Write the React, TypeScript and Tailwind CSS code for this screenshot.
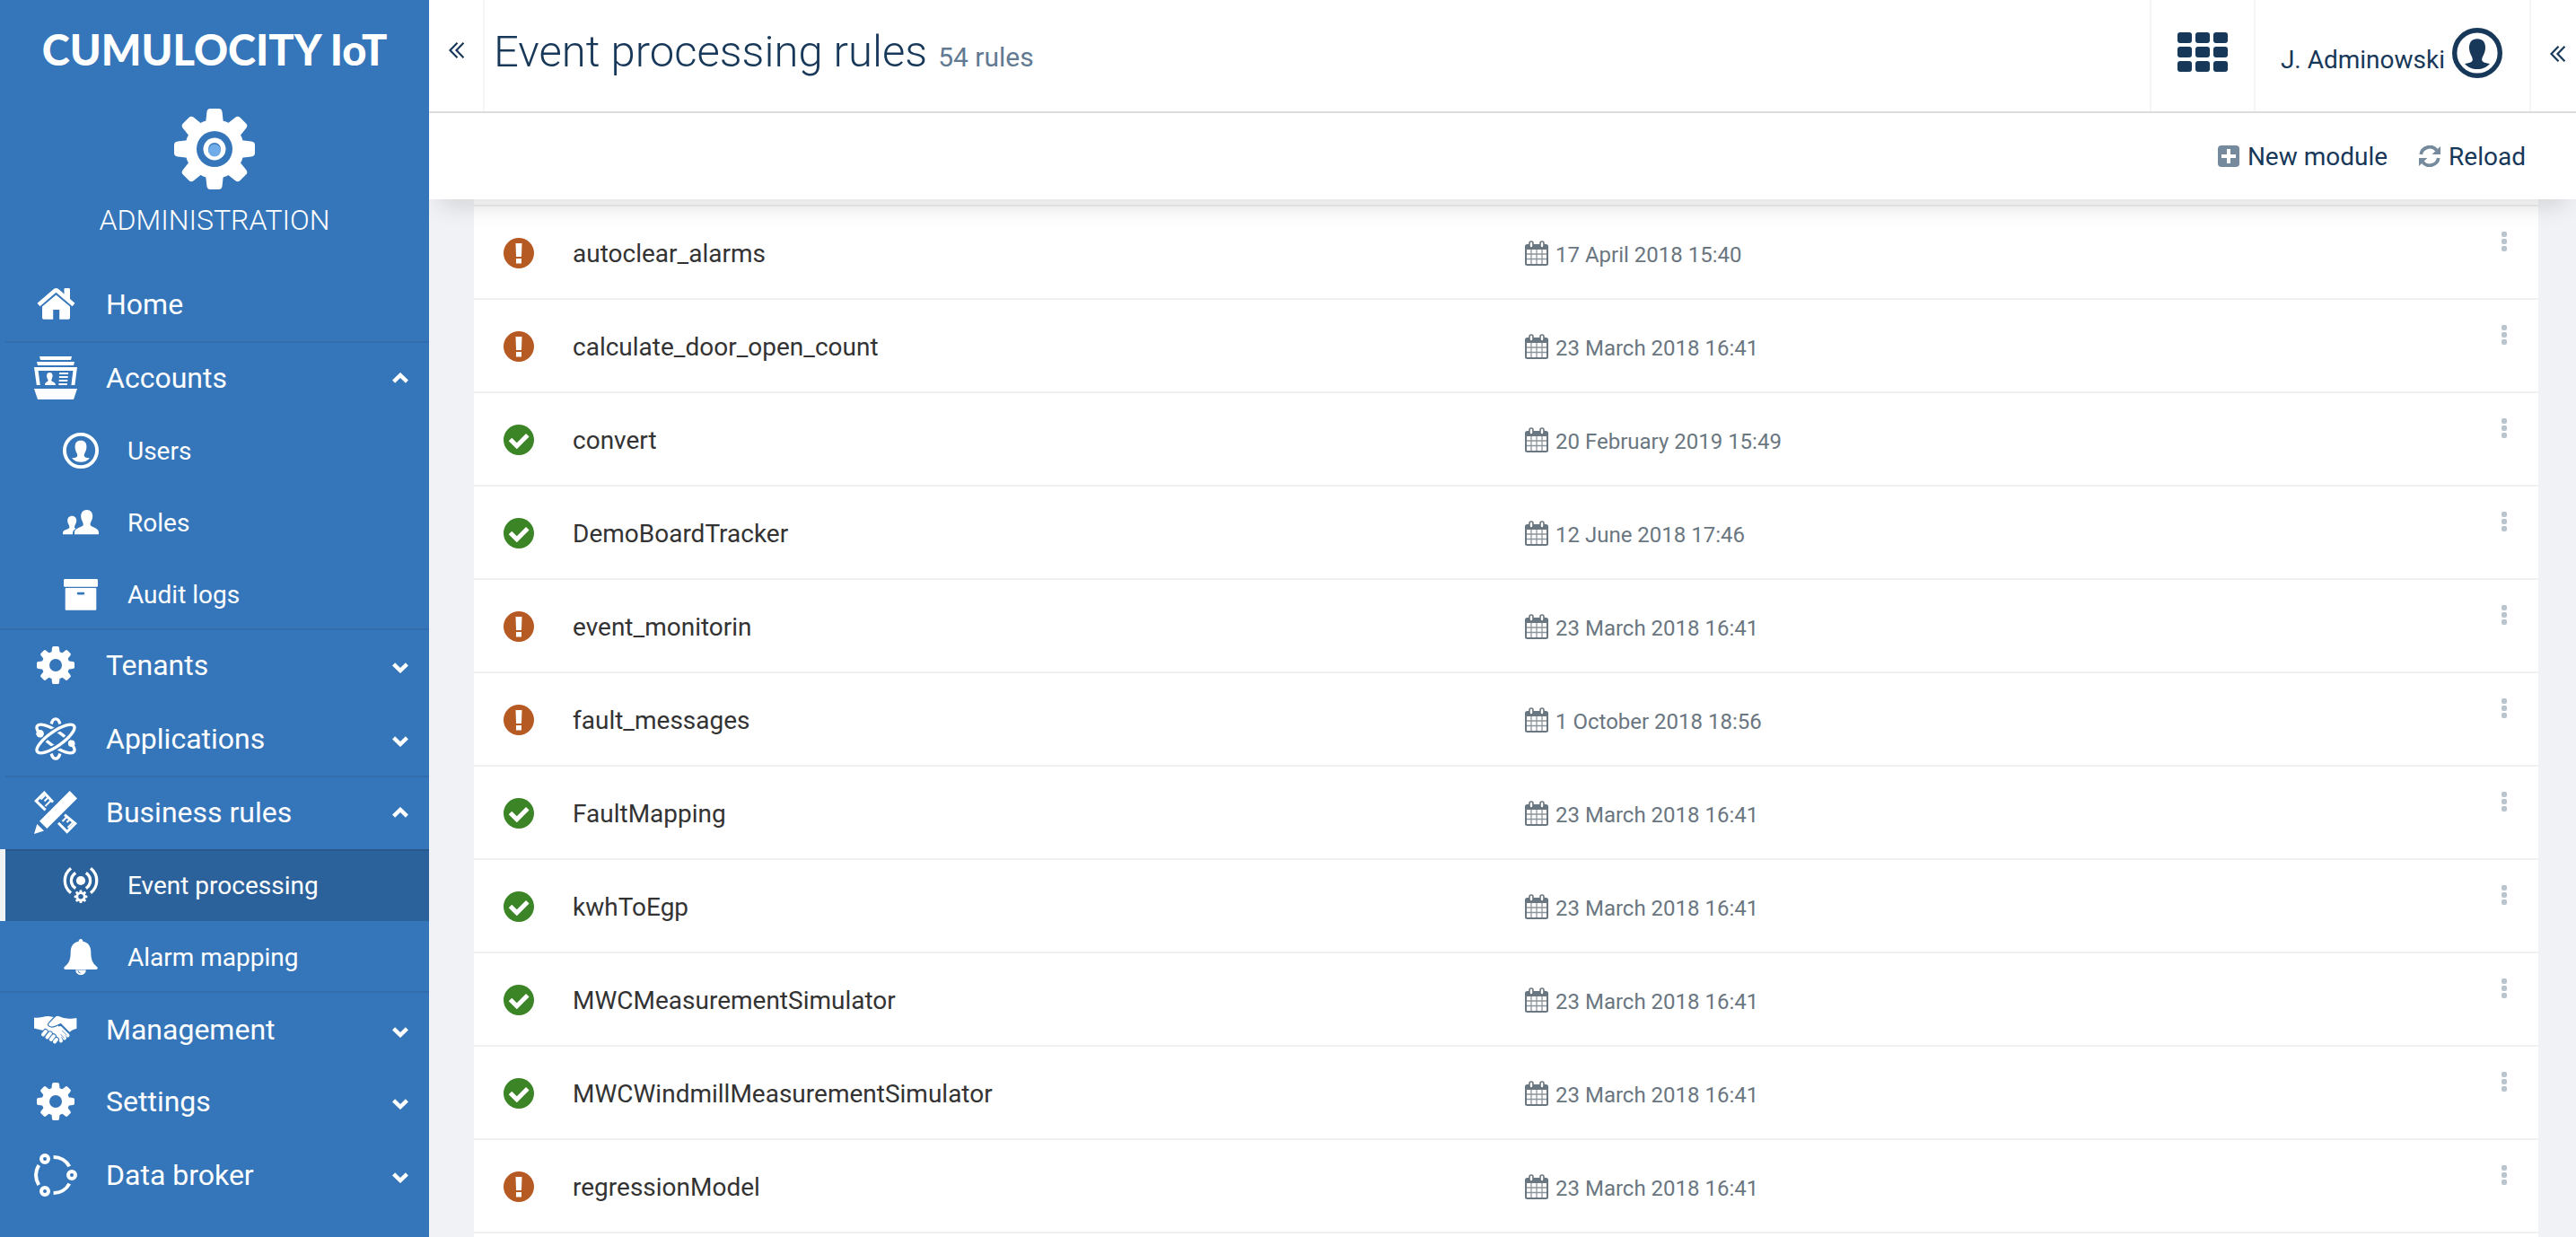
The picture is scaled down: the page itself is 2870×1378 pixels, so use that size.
import type { ReactNode } from "react";

const BLUE = "#3576ba";

/* ---------- Icons ---------- */

function GearShape({ hole }: { hole: ReactNode }) {
  return (
    <>
      {[0, 45, 90, 135, 180, 225, 270, 315].map((angle) => (
        <path
          key={angle}
          transform={`rotate(${angle})`}
          d="M-10 -28L-8.6 -41Q-8.2 -45 -4.6 -45H4.6Q8.2 -45 8.6 -41L10 -28Z"
        />
      ))}
      <circle r="33" />
      {hole}
    </>
  );
}

function AdminGear() {
  return (
    <svg className="mt-[11px] size-[90px]" viewBox="-45 -45 90 90" fill="white" aria-hidden="true">
      <GearShape
        hole={
          <>
            <circle r="20" fill={BLUE} />
            <circle r="12.5" />
            <circle r="7" fill={BLUE} />
            <ellipse cy="1.6" rx="7" ry="7" fill="#70ace8" />
          </>
        }
      />
    </svg>
  );
}

function GearIcon() {
  return (
    <svg className="size-[42px]" viewBox="-45 -45 90 90" fill="white" aria-hidden="true">
      <GearShape hole={<circle r="15" fill={BLUE} />} />
    </svg>
  );
}

function HomeIcon() {
  return (
    <svg className="h-[35px] w-[43px]" viewBox="0 0 43 35" fill="white" aria-hidden="true">
      <path d="M30.5 1.2Q30.5 0 31.7 0H35.8Q37 0 37 1.2V13L30.5 8Z" />
      <path d="M2 18.4L20 3Q21.5 1.8 23 3L41 18.4" fill="none" stroke="white" strokeWidth="4.6" />
      <path d="M21.5 7.4L37 20.5V33Q37 34.8 35.2 34.8H25.2V24H18.2V34.8H7.8Q6 34.8 6 33V20.5Z" />
    </svg>
  );
}

function AccountsIcon() {
  return (
    <svg className="size-12" viewBox="0 0 48 48" fill="white" aria-hidden="true">
      <path d="M6 0H42L41 4H7ZM3 6H45L44 10H4ZM0 12H48L45.4 32H41.4L43.4 16H4.6L6.8 32H2.8ZM0 36H48L44 48H4Z" />
      <path d="M17.3 18c2.2 0 3.3 1.6 3.3 3.8 0 2.4-1.4 3.6-1.4 5 0 1.6 4.8 1.6 4.8 5.2H12c0-3.600 3.600-3.600 3.600-5.200 0-1.400-1.600-2.600-1.600-5 0-2.200 1.100-3.800 3.300-3.800Z" />
      <path d="M28.200 18H38.200L38 20H28ZM28 22H37.800L37.600 24H27.800ZM27.800 26H37.400L37.200 28H27.600ZM27.500 30H36.900L36.700 32H27.300Z" />
    </svg>
  );
}

function UserCircleIcon({ className }: { className: string }) {
  return (
    <svg className={className} viewBox="0 0 56 56" fill="currentColor" aria-hidden="true">
      <circle cx="28" cy="28" r="25.300" fill="none" stroke="currentColor" strokeWidth="5.400" />
      <path d="M28 12.300C34 12.300 37 16 37 22C37 29 33.200 31.500 33.200 35.500C33.200 38.500 37 39 42 40C38 44 34 46 28 46C22 46 18 44 14 40C19 39 22.800 38.500 22.800 35.500C22.800 31.500 19 29 19 22C19 16 22 12.300 28 12.300Z" />
    </svg>
  );
}

function RolesIcon() {
  return (
    <svg className="h-7 w-10" viewBox="0 0 40 28" fill="white" aria-hidden="true">
      <path d="M26.700 0C31 0 33.200 3 33.200 7C33.200 11.500 30.600 13 30.600 16.500C30.600 19.500 40 19.500 40 25V27.300H13V25C13 19.500 22.800 19.500 22.800 16.500C22.800 13 20.200 11.500 20.200 7C20.200 3 22.400 0 26.700 0Z" />
      <path d="M10.200 6.700C13.500 6.700 15.200 9 15.200 12C15.200 15.500 13 16.800 13 19.200C13 20.200 13.600 20.600 14.600 21C12 22.200 11 23.500 11 27.300H0V25.500C0 21.500 7.400 22 7.400 19.200C7.400 16.800 5.200 15.500 5.200 12C5.200 9 6.900 6.700 10.200 6.700Z" />
    </svg>
  );
}

function ArchiveIcon() {
  return (
    <svg className="h-[35px] w-[38px]" viewBox="0 0 38 35" fill="white" aria-hidden="true">
      <rect width="38" height="8.800" rx="1.400" />
      <rect x="1.700" y="10" width="34.600" height="24.700" rx="1" />
      <rect x="14.700" y="14.700" width="8.600" height="2.800" rx="1.400" fill={BLUE} />
    </svg>
  );
}

function AtomIcon() {
  return (
    <svg className="size-12" viewBox="-24 -24 48 48" fill="none" stroke="white" strokeWidth="3.400" aria-hidden="true">
      <path d="M-4.800 -16.500C-3 -24 3 -24 4.800 -16.500M-4.800 16.500C-3 24 3 24 4.800 16.500" />
      <ellipse rx="25" ry="8" transform="rotate(35)" />
      <ellipse rx="25" ry="8" transform="rotate(-35)" stroke={BLUE} strokeWidth="7" />
      <ellipse rx="25" ry="8" transform="rotate(-35)" />
      <circle cx="-17.400" cy="-5.700" r="4.300" fill="white" stroke="none" />
      <circle cx="17.700" cy="5.300" r="3.800" fill="white" stroke="none" />
    </svg>
  );
}

function PencilRulerIcon() {
  return (
    <svg className="size-12" viewBox="0 0 48 48" fill="white" aria-hidden="true">
      <path d="M39.700 0L48 8.600L14.300 42L6 33.700ZM3.300 37L11 44.600L0 48Z" />
      <g fill="none" stroke="white" strokeWidth="3">
        <path d="M21 12.500L11.300 2.200L2.200 11.300L12.600 21.400" />
        <path d="M34 26.600L45.800 36.400L36.700 45.600L27 35.800" />
      </g>
      <g fill="none" stroke="white" strokeWidth="2">
        <path d="M12 5L7.500 9.500M15 8L11.500 11.500M18.500 11L12.500 17" />
        <path d="M37 28.500L31.500 34M40 31.500L36.500 35M43.500 35L37.500 41" />
      </g>
    </svg>
  );
}

function BroadcastIcon() {
  return (
    <svg className="size-10" viewBox="0 0 40 40" fill="white" aria-hidden="true">
      <circle cx="20" cy="15" r="5.100" />
      <g fill="none" stroke="white" strokeWidth="3.300">
        <path d="M9 1.300C0 8.500 0 21.500 9 28.700M31 1.300C40 8.500 40 21.500 31 28.700" />
        <path d="M14.200 6.300C7.800 11 7.800 19 14.200 23.700M25.800 6.300C32.200 11 32.200 19 25.800 23.700" />
      </g>
      <g transform="translate(20 32.800) scale(0.164)">
        <GearShape hole={<circle r="17" fill="#2c629b" />} />
      </g>
    </svg>
  );
}

function BellIcon() {
  return (
    <svg className="h-10 w-[38px]" viewBox="0 0 38 40" fill="white" aria-hidden="true">
      <path d="M19 0C20.500 0 21.300 1 21.300 2.800C27.500 3.800 30.300 8.500 30.300 14.500C30.300 24.500 33 27.500 37.300 31.200C38.200 32 37.600 34 36.200 34H1.800C.4 34-.2 32 .7 31.200C5 27.500 7.700 24.500 7.700 14.500C7.700 8.500 10.500 3.800 16.700 2.800C16.700 1 17.500 0 19 0Z" />
      <path d="M13.200 34.500H24.800A5.800 5.800 0 0 1 13.200 34.500Z" />
      <path d="M15.800 35.200Q16.500 37.800 18.800 38.200" fill="none" stroke={BLUE} strokeWidth=".8" />
    </svg>
  );
}

function HandshakeIcon() {
  return (
    <svg className="h-8 w-12" viewBox="0 0 48 32" fill="white" aria-hidden="true">
      <path d="M0 2.600C6 3.600 10 1.200 16 1L22 2L27 12L34 22L30 24L12 17L8 16.500L0 14.600Z" />
      <g stroke="white" strokeWidth="4" strokeLinecap="round">
        <path d="M29 14L37.500 22.500M27 16L34 25.500M25 19L30 28.500" />
      </g>
      <path d="M31 17L36.500 22.200M29.500 21L33.500 25.500" stroke={BLUE} strokeWidth=".7" />
      <g strokeLinecap="round" stroke={BLUE} strokeWidth="6">
        <path d="M10 21.500L12.800 18M14.500 24.500L17.800 20.300M18.800 27L21.800 23.300M23 29.400L25 27" />
      </g>
      <g strokeLinecap="round" stroke="white" strokeWidth="4">
        <path d="M10 21.500L12.800 18M14.500 24.500L17.800 20.300M18.800 27L21.800 23.300M23 29.400L25 27" />
      </g>
      <path
        d="M27.500 .4C34 3.600 40 3.800 48 2.400V15.400C44 16.200 41.500 17.400 39.600 19.600L29.500 9.500C26 11.500 21.500 14 18 12.800C15.400 12 14.800 10 16.500 8.300L22.500 2Q24.500 -.4 27.500 .4Z"
        stroke={BLUE}
        strokeWidth="1.200"
      />
    </svg>
  );
}

function DataBrokerIcon() {
  return (
    <svg className="size-12" viewBox="0 0 48 48" fill="none" stroke="white" strokeWidth="4" aria-hidden="true">
      <circle cx="12" cy="6" r="4" />
      <circle cx="42" cy="24" r="4" />
      <circle cx="12" cy="42" r="4" />
      <path d="M21.600 4A20 20 0 0 1 39.300 14.400M39.300 33.600A20 20 0 0 1 21.600 44M5.200 35A22 22 0 0 1 5.200 13" />
    </svg>
  );
}

function Chevron({ up }: { up?: boolean }) {
  return (
    <svg
      className={up ? "h-3 w-[18px]" : "mt-1.5 h-3 w-[18px]"}
      viewBox="0 0 18 12"
      fill="none"
      stroke="white"
      strokeWidth="4.400"
      aria-hidden="true"
    >
      <path d={up ? "M1.600 10.200L9 3L16.400 10.200" : "M1.600 1.800L9 9L16.400 1.800"} />
    </svg>
  );
}

function DoubleLeft() {
  return (
    <svg className="h-[18px] w-[17px]" viewBox="0 0 17 18" fill="none" stroke="currentColor" strokeWidth="2.200" aria-hidden="true">
      <path d="M9.500 .8L1.500 9L9.500 17.200M16.500 .8L8.500 9L16.500 17.200" />
    </svg>
  );
}

function AppGridIcon() {
  return (
    <svg className="h-11 w-14" viewBox="0 0 56 44" fill="currentColor" aria-hidden="true">
      {[0, 16, 32].map((y) =>
        [0, 20, 40].map((x) => <rect key={`${x}-${y}`} x={x} y={y} width="16" height="12" rx="3" />),
      )}
    </svg>
  );
}

function PlusSquareIcon() {
  return (
    <svg className="size-6" viewBox="0 0 24 24" fill="#768a9e" aria-hidden="true">
      <rect width="24" height="24" rx="4" />
      <path d="M10 4H14V10H20V14H14V20H10V14H4V10H10Z" fill="white" />
    </svg>
  );
}

function RefreshIcon() {
  return (
    <svg className="size-6" viewBox="-12 -12 24 24" fill="#768a9e" aria-hidden="true">
      {[0, 180].map((angle) => (
        <g key={angle} transform={`rotate(${angle})`}>
          <path d="M-9.800 -2A10 10 0 0 1 7.800 -6.600" fill="none" stroke="#768a9e" strokeWidth="3.800" />
          <path d="M12 -11V-2H2.600L5.600 -5Z" />
        </g>
      ))}
    </svg>
  );
}

function CalendarIcon() {
  return (
    <svg className="h-7 w-[26px]" viewBox="0 0 26 28" aria-hidden="true">
      <rect x="1" y="5" width="24" height="22" rx="1.500" fill="white" stroke="#6a7680" strokeWidth="2" />
      <path d="M1 5H25V10H1Z" fill="#6a7680" />
      <path d="M7 10V26M13 10V26M19 10V26M2 15H24M2 20.500H24" stroke="#8b959d" strokeWidth="1.300" />
      <rect x="5" y="1" width="4" height="7" rx="2" fill="white" stroke="#6a7680" strokeWidth="1.600" />
      <rect x="17" y="1" width="4" height="7" rx="2" fill="white" stroke="#6a7680" strokeWidth="1.600" />
    </svg>
  );
}

function StatusIcon({ ok }: { ok: boolean }) {
  return ok ? (
    <svg className="size-[34px]" viewBox="0 0 34 34" role="img" aria-label="Active">
      <circle cx="17" cy="17" r="17" fill="#3b8527" />
      <path d="M7.500 16.500L14.800 23.800L26.800 11.800" fill="none" stroke="white" strokeWidth="5" />
    </svg>
  ) : (
    <svg className="size-[34px]" viewBox="0 0 34 34" role="img" aria-label="Inactive">
      <circle cx="17" cy="17" r="17" fill="#b55a22" />
      <path d="M13.500 6H20.500L20 21H14ZM14 23H20V28.500H14Z" fill="white" />
    </svg>
  );
}

/* ---------- Sidebar ---------- */

function TopItem({
  icon,
  label,
  chevron,
  line = "none",
}: {
  icon: ReactNode;
  label: string;
  chevron?: "up" | "down";
  line?: "none" | "visible" | "hidden";
}) {
  const lineClass =
    line === "visible" ? "border-t-2 border-[#316dac]" : line === "hidden" ? "border-t-2 border-transparent" : "";
  return (
    <div className={`ml-1.5 ${lineClass}`}>
      <button type="button" className="flex h-20 w-full items-center gap-8 pr-[23px] pb-[3px] pl-8 text-left text-[32px] leading-10">
        <span className="flex w-12 justify-center">{icon}</span>
        <span className="flex-1">{label}</span>
        {chevron && <Chevron up={chevron === "up"} />}
      </button>
    </div>
  );
}

function SubItem({ icon, label, active, last }: { icon: ReactNode; label: string; active?: boolean; last?: boolean }) {
  return (
    <li className={last ? "shadow-[inset_0_-2px_0_#316dac]" : ""}>
      <a
        href="#"
        aria-current={active ? "page" : undefined}
        className={`flex h-20 items-center gap-8 border-l-6 pl-16 text-[28px] leading-10 ${
          active ? "border-[#f0f2f5] bg-[#2c629b] shadow-[inset_0_2px_0_#28588b]" : "border-transparent"
        }`}
      >
        <span className="flex w-10 justify-center">{icon}</span>
        <span className="pt-0.5">{label}</span>
      </a>
    </li>
  );
}

function Sidebar() {
  return (
    <aside className="flex w-[478px] shrink-0 flex-col bg-[#3576ba] text-white">
      <div className="flex flex-col items-center pb-[35px]">
        <div className="font-['Lato',sans-serif] text-[47px] leading-[110px] font-black">CUMULOCITY IoT</div>
        <AdminGear />
        <div className="mt-3.5 text-[32px] leading-10 font-light">ADMINISTRATION</div>
      </div>
      <nav aria-label="Main">
        <TopItem icon={<HomeIcon />} label="Home" />
        <TopItem icon={<AccountsIcon />} label="Accounts" chevron="up" line="visible" />
        <ul>
          <SubItem icon={<UserCircleIcon className="size-10" />} label="Users" />
          <SubItem icon={<RolesIcon />} label="Roles" />
          <SubItem icon={<ArchiveIcon />} label="Audit logs" last />
        </ul>
        <TopItem icon={<GearIcon />} label="Tenants" chevron="down" />
        <TopItem icon={<AtomIcon />} label="Applications" chevron="down" line="hidden" />
        <TopItem icon={<PencilRulerIcon />} label="Business rules" chevron="up" line="visible" />
        <ul>
          <SubItem icon={<BroadcastIcon />} label="Event processing" active />
          <SubItem icon={<BellIcon />} label="Alarm mapping" last />
        </ul>
        <TopItem icon={<HandshakeIcon />} label="Management" chevron="down" line="hidden" />
        <TopItem icon={<GearIcon />} label="Settings" chevron="down" />
        <TopItem icon={<DataBrokerIcon />} label="Data broker" chevron="down" line="hidden" />
      </nav>
    </aside>
  );
}

/* ---------- Header ---------- */

function Header() {
  return (
    <header className="flex h-[126px] items-stretch border-b-2 border-[#dcdcdc] bg-white text-[#183859]">
      <button type="button" aria-label="Collapse navigation" className="flex w-[62px] items-center justify-center border-r-2 border-[#f5f5f5] pb-3">
        <DoubleLeft />
      </button>
      <h1 className="flex flex-1 items-baseline gap-3 pt-[22px] pl-2.5 text-[49px] leading-[72px] font-light">
        Event processing rules
        <small className="text-[30px] font-normal text-[#627a92]">54 rules</small>
      </h1>
      <button type="button" aria-label="Applications" className="flex w-[116px] items-center justify-center border-l-2 border-[#f5f5f5] pb-2">
        <AppGridIcon />
      </button>
      <button type="button" className="flex items-center gap-2 border-l-2 border-[#f5f5f5] pr-[30px] pb-1.5 pl-7 text-[28px] leading-8">
        <span className="pt-4">J. Adminowski</span>
        <UserCircleIcon className="size-14" />
      </button>
      <button type="button" aria-label="Open drawer" className="flex w-[52px] items-center justify-end border-l-2 border-[#f5f5f5] pr-3 pb-1">
        <DoubleLeft />
      </button>
    </header>
  );
}

function Toolbar() {
  return (
    <div className="flex h-24 items-center justify-end gap-[35px] bg-white pr-14 text-[28px] leading-8 text-[#183859]">
      <button type="button" className="flex items-center gap-[9px]">
        <PlusSquareIcon />
        <span className="pt-0.5">New module</span>
      </button>
      <button type="button" className="flex items-center gap-[9px]">
        <RefreshIcon />
        <span className="pt-0.5">Reload</span>
      </button>
    </div>
  );
}

/* ---------- Rules ---------- */

const rules = [
  { name: "autoclear_alarms", date: "17 April 2018 15:40", ok: false },
  { name: "calculate_door_open_count", date: "23 March 2018 16:41", ok: false },
  { name: "convert", date: "20 February 2019 15:49", ok: true },
  { name: "DemoBoardTracker", date: "12 June 2018 17:46", ok: true },
  { name: "event_monitorin", date: "23 March 2018 16:41", ok: false },
  { name: "fault_messages", date: "1 October 2018 18:56", ok: false },
  { name: "FaultMapping", date: "23 March 2018 16:41", ok: true },
  { name: "kwhToEgp", date: "23 March 2018 16:41", ok: true },
  { name: "MWCMeasurementSimulator", date: "23 March 2018 16:41", ok: true },
  { name: "MWCWindmillMeasurementSimulator", date: "23 March 2018 16:41", ok: true },
  { name: "regressionModel", date: "23 March 2018 16:41", ok: false },
];

function RuleRow({ name, date, ok }: { name: string; date: string; ok: boolean }) {
  return (
    <li className="grid h-[104px] grid-cols-[110px_1fr_1fr_68px] items-center border-t-2 border-[#f0f0f0]">
      <span className="pt-0.5 pl-[33px]">
        <StatusIcon ok={ok} />
      </span>
      <a href="#" className="pt-1 text-[28px] leading-8 text-[#333]">
        {name}
      </a>
      <span className="flex items-center gap-2 pt-0.5 text-[24px] leading-8 text-[#6a7680]">
        <CalendarIcon />
        <span className="pt-1">{date}</span>
      </span>
      <button type="button" aria-label={`Actions for ${name}`} className="flex flex-col items-center gap-0.5 self-start py-7 pr-2">
        <span className="size-1.5 rounded-[2px] bg-[#b9c4ce]" />
        <span className="size-1.5 rounded-[2px] bg-[#b9c4ce]" />
        <span className="size-1.5 rounded-[2px] bg-[#b9c4ce]" />
      </button>
    </li>
  );
}

export default function App() {
  return (
    <div className="flex min-h-screen bg-[#f0f2f5] font-['Roboto',sans-serif]">
      <Sidebar />
      <div className="flex min-w-0 flex-1 flex-col overflow-hidden">
        <div className="relative z-10 shadow-[0_20px_24px_-12px_rgba(0,0,0,0.12)]">
          <Header />
          <Toolbar />
        </div>
        <main className="flex flex-1 flex-col pr-[42px] pl-[50px]">
          <ul className="bg-white pt-1.5">
            {rules.map((rule) => (
              <RuleRow key={rule.name} {...rule} />
            ))}
          </ul>
          <div className="flex-1 border-t-2 border-[#f0f0f0] bg-white" />
        </main>
      </div>
    </div>
  );
}
